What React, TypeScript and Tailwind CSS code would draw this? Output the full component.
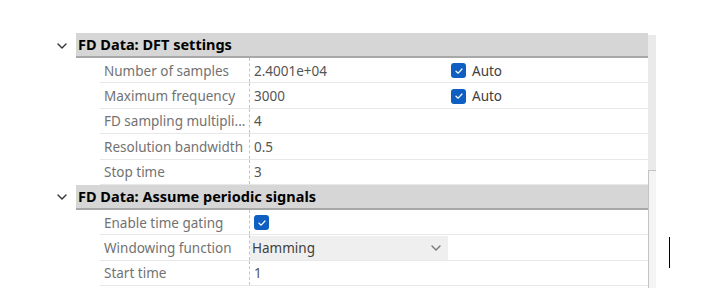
import React from "react";

const Check = () => (
  <span className="inline-flex h-[15px] w-[15px] items-center justify-center rounded-[3px] bg-[#0f5fc2]">
    <svg width="10" height="10" viewBox="0 0 10 10" fill="none">
      <path d="M2 5.2 L4.2 7.2 L8 3" stroke="white" strokeWidth="1.2" strokeLinecap="round" strokeLinejoin="round" />
    </svg>
  </span>
);

const Chevron = ({ color = "#333", w = 12 }: { color?: string; w?: number }) => (
  <svg width={w} height="8" viewBox="0 0 12 8" fill="none">
    <path d="M2 2 L6 6 L10 2" stroke={color} strokeWidth="1.4" strokeLinecap="round" strokeLinejoin="round" />
  </svg>
);

const Header = ({ title }: { title: string }) => (
  <div className="flex h-[25px] items-stretch">
    <div className="flex w-[76px] items-center justify-end pr-[8px]">
      <Chevron color="#333" />
    </div>
    <div className="flex flex-1 items-center whitespace-nowrap border-b-2 border-[#a8a8a8] bg-[#d6d6d6] pl-[2px] pt-[1px] text-[14.5px] font-bold text-black">
      {title}
    </div>
  </div>
);

const Row = ({ label, children }: { label: string; children?: React.ReactNode }) => (
  <div className="flex h-[25.4px] items-stretch">
    <div className="w-[100px]" />
    <div className="flex flex-1 items-stretch border-b border-[#e8e8e8]">
      <div className="flex w-[150px] items-center whitespace-nowrap border-r border-dashed border-[#c4c4c4] pl-[4px] pt-[1px] text-[#727272]">
        {label}
      </div>
      <div className="flex flex-1 items-center whitespace-nowrap pt-[1px] text-[#555]">{children}</div>
    </div>
  </div>
);

export default function App() {
  return (
    <div
      className="relative h-[293px] w-[716px] overflow-hidden bg-white text-[13.5px]"
      style={{ fontFamily: '"Noto Sans", "Open Sans", sans-serif' }}
    >
      <div className="flex pt-[33px]">
        <div className="w-[648px]">
          <Header title="FD Data: DFT settings" />
          <Row label="Number of samples">
            <span className="w-[201px] pl-[4px]">2.4001e+04</span>
            <Check />
            <span className="pl-[6px] text-[#404040]">Auto</span>
          </Row>
          <Row label="Maximum frequency">
            <span className="w-[201px] pl-[4px]">3000</span>
            <Check />
            <span className="pl-[6px] text-[#404040]">Auto</span>
          </Row>
          <Row label="FD sampling multipli...">
            <span className="pl-[4px]">4</span>
          </Row>
          <Row label="Resolution bandwidth">
            <span className="pl-[4px]">0.5</span>
          </Row>
          <Row label="Stop time">
            <span className="pl-[4px]">3</span>
          </Row>
          <Header title="FD Data: Assume periodic signals" />
          <Row label="Enable time gating">
            <span className="pl-[4px]">
              <Check />
            </span>
          </Row>
          <Row label="Windowing function">
            <div className="flex h-full w-[198px] items-center justify-between bg-[#efefef] pl-[2px] pr-[6px] text-[#404040]">
              <span>Hamming</span>
              <Chevron color="#777" />
            </div>
          </Row>
          <Row label="Start time">
            <span className="pl-[4px]">1</span>
          </Row>
        </div>
        <div className="flex w-[8px] flex-col pt-[2px]">
          <div className="h-[135px] bg-[#eaeaea]" />
          <div className="h-[118px] border-l border-t border-[#c4c4c4] bg-[#f4f4f4]" />
        </div>
      </div>
      <div className="absolute left-[669px] top-[237px] h-[31px] w-[1px] bg-black" />
    </div>
  );
}
